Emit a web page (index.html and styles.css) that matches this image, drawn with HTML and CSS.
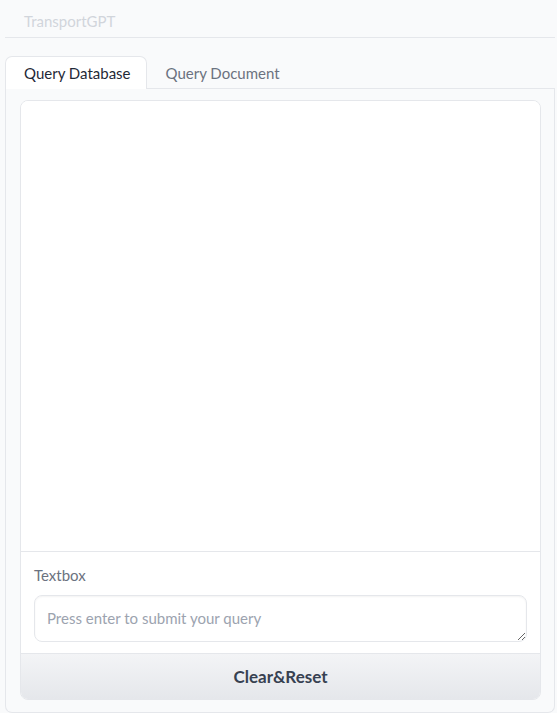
FILE: index.html
```html
<!DOCTYPE html>
<html>
<head>
<meta charset="utf-8">
<link rel="stylesheet" href="styles.css">
</head>
<body>
<div class="app">
  <header class="title">TransportGPT</header>
  <div class="tabs">
    <div class="tab-nav">
      <button class="tab selected">Query Database</button>
      <button class="tab">Query Document</button>
    </div>
    <div class="tab-panel">
      <div class="group">
        <div class="chatbot"></div>
        <div class="textbox-block">
          <label class="label">Textbox</label>
          <textarea class="input" rows="1" placeholder="Press enter to submit your query"></textarea>
        </div>
        <button class="reset">Clear&amp;Reset</button>
      </div>
    </div>
  </div>
</div>
</body>
</html>
```
FILE: styles.css
```css
* { box-sizing: border-box; }
html, body { margin: 0; padding: 0; }
body {
  background: #f9fafb;
  font-family: "Lato", "Noto Sans", sans-serif;
  width: 557px;
  height: 713px;
  overflow: hidden;
}
.app {
  padding: 0 2px 0 5px;
}
.title {
  height: 38px;
  border-bottom: 1px solid #e5e7eb;
  padding: 11px 0 0 19px;
  font-size: 15px;
  color: #d1d5db;
  line-height: 20px;
}
.tabs {
  margin-top: 18px;
}
.tab-nav {
  display: flex;
  height: 33px;
  border-bottom: 1px solid #e5e7eb;
}
.tab {
  font-family: inherit;
  font-size: 15px;
  background: transparent;
  border: 1px solid transparent;
  border-bottom: none;
  border-top-left-radius: 7px;
  border-top-right-radius: 7px;
  padding: 0 15px 0 18px;
  height: 33px;
  margin-bottom: -1px;
  color: #6b7280;
  cursor: pointer;
  line-height: 32px;
  white-space: nowrap;
}
.tab.selected {
  background: #ffffff;
  border-color: #e5e7eb;
  color: #1f2937;
}
.tab-panel {
  border: 1px solid #e5e7eb;
  border-top: none;
  border-bottom-left-radius: 7px;
  border-bottom-right-radius: 7px;
  padding: 11px 13px 12px 14px;
  height: 624px;
}
.group {
  border: 1px solid #e5e7eb;
  border-radius: 8px;
  overflow: hidden;
  background: #ffffff;
  display: flex;
  flex-direction: column;
  height: 600px;
}
.chatbot {
  height: 451px;
  flex: none;
  border-bottom: 1px solid #e5e7eb;
  background: #ffffff;
}
.textbox-block {
  padding: 13px 13px 11px 13px;
  display: flex;
  flex-direction: column;
  border-bottom: 1px solid #e5e7eb;
}
.label {
  font-size: 15px;
  color: #6b7280;
  line-height: 20px;
  margin-bottom: 10px;
}
.input {
  font-family: inherit;
  font-size: 15px;
  height: 47px;
  border: 1px solid #e5e7eb;
  border-radius: 8px;
  padding: 11px 12px;
  box-shadow: inset 0 1px 2px rgba(0,0,0,0.05);
  resize: vertical;
  color: #1f2937;
  line-height: 22px;
  outline: none;
}
.input::placeholder { color: #9ca3af; }
.reset {
  flex: 1;
  border: none;
  background: linear-gradient(to bottom, #f3f4f6, #e5e7eb);
  font-family: inherit;
  font-size: 17px;
  font-weight: 700;
  color: #374151;
}
```
